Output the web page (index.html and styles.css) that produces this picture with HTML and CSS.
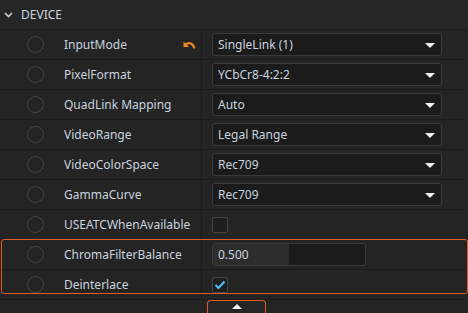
FILE: index.html
```html
<!DOCTYPE html>
<html lang="en">
<head>
    <meta charset="UTF-8">
    <meta name="viewport" content="width=device-width, initial-scale=1.0">
    <title>Device</title>
    <link rel="stylesheet" href="styles.css">
</head>
<body>
    <div class="panel">
        <div class="header">
            <svg class="chevron" width="9" height="6" viewBox="0 0 9 6"><path d="M1 1 L4.5 4.5 L8 1" fill="none" stroke="#c8d0dc" stroke-width="1.6"/></svg>
            <span>DEVICE</span>
        </div>

        <div class="row">
            <div class="name">
                <span class="dot"></span>
                <span class="label">InputMode</span>
                <svg class="reset" width="13" height="9" viewBox="0 0 13 9"><path d="M0.5 0.5 V6 H6 Z" fill="#f08a1a"/><path d="M2.5 3.5 C6 1 10 2 11.5 7.5" fill="none" stroke="#f08a1a" stroke-width="2.2"/></svg>
            </div>
            <div class="value">
                <div class="select">SingleLink (1)<span class="caret"></span></div>
            </div>
        </div>

        <div class="row">
            <div class="name"><span class="dot"></span><span class="label">PixelFormat</span></div>
            <div class="value"><div class="select">YCbCr8-4:2:2<span class="caret"></span></div></div>
        </div>

        <div class="row">
            <div class="name"><span class="dot"></span><span class="label">QuadLink Mapping</span></div>
            <div class="value"><div class="select">Auto<span class="caret"></span></div></div>
        </div>

        <div class="row">
            <div class="name"><span class="dot"></span><span class="label">VideoRange</span></div>
            <div class="value"><div class="select">Legal Range<span class="caret"></span></div></div>
        </div>

        <div class="row">
            <div class="name"><span class="dot"></span><span class="label">VideoColorSpace</span></div>
            <div class="value"><div class="select">Rec709<span class="caret"></span></div></div>
        </div>

        <div class="row">
            <div class="name"><span class="dot"></span><span class="label">GammaCurve</span></div>
            <div class="value"><div class="select">Rec709<span class="caret"></span></div></div>
        </div>

        <div class="row">
            <div class="name"><span class="dot"></span><span class="label">USEATCWhenAvailable</span></div>
            <div class="value"><span class="check"></span></div>
        </div>

        <div class="group">
            <div class="row">
                <div class="name"><span class="dot"></span><span class="label">ChromaFilterBalance</span></div>
                <div class="value">
                    <div class="number"><span class="fill" style="width: 50%"></span><span class="num">0.500</span></div>
                </div>
            </div>
            <div class="row">
                <div class="name"><span class="dot"></span><span class="label">Deinterlace</span></div>
                <div class="value">
                    <span class="check">
                        <svg width="12" height="10" viewBox="0 0 12 10"><path d="M1.5 5 L4.5 8 L10.5 1.5" fill="none" stroke="#4cbcf2" stroke-width="2.2"/></svg>
                    </span>
                </div>
            </div>
        </div>

        <div class="footer">
            <div class="more"><span class="up"></span></div>
        </div>
    </div>
</body>
</html>
```

FILE: styles.css
```css
body {
    margin: 0;
    background-color: #242424;
    font-family: "Noto Sans", "Open Sans", sans-serif;
    font-size: 12px;
    color: #c9d3df;
    overflow: hidden;
}

.panel {
    width: 468px;
}

.header {
    height: 29px;
    border-bottom: 1px solid #1b1b1b;
    display: flex;
    align-items: center;
    padding-left: 4px;
    gap: 8px;
    background-color: #262626;
}

.row {
    display: grid;
    grid-template-columns: 202px 1fr;
    height: 29px;
    border-bottom: 1px solid #1b1b1b;
}

.name {
    display: flex;
    align-items: center;
    border-right: 1px solid #1b1b1b;
    padding-left: 27px;
    position: relative;
}

.dot {
    width: 14px;
    height: 14px;
    border: 1.5px solid #474747;
    border-radius: 50%;
    box-sizing: border-box;
    width: 17px;
    height: 17px;
}

.label {
    margin-left: 20px;
}

.reset {
    position: absolute;
    right: 5px;
    top: 11px;
}

.value {
    display: flex;
    align-items: center;
    padding-left: 10px;
}

.select {
    width: 230px;
    height: 23px;
    box-sizing: border-box;
    background-color: #1b1b1b;
    border: 1px solid #3a3a3a;
    border-radius: 3px;
    display: flex;
    align-items: center;
    padding-left: 5px;
    position: relative;
}

.caret {
    position: absolute;
    right: 6px;
    top: 9px;
    width: 0;
    height: 0;
    border-left: 5px solid transparent;
    border-right: 5px solid transparent;
    border-top: 5px solid #f0f0f0;
}

.check {
    width: 16px;
    height: 16px;
    box-sizing: border-box;
    border: 1px solid #454545;
    border-radius: 2px;
    background-color: #1e1e1e;
    display: flex;
    align-items: center;
    justify-content: center;
}

.number {
    width: 154px;
    height: 23px;
    box-sizing: border-box;
    background-color: #1b1b1b;
    border: 1px solid #3a3a3a;
    border-radius: 3px;
    position: relative;
    overflow: hidden;
    display: flex;
    align-items: center;
}

.fill {
    position: absolute;
    left: 0;
    top: 0;
    bottom: 0;
    background-color: #2d2d2d;
}

.num {
    position: relative;
    padding-left: 5px;
}

.group {
    position: relative;
}

.group::after {
    content: "";
    position: absolute;
    top: -1px;
    left: 1px;
    right: 0;
    height: 55px;
    box-sizing: border-box;
    border: 1px solid #e2592a;
    border-radius: 3px;
    pointer-events: none;
}

.footer {
    height: 20px;
    padding-left: 207px;
}

.more {
    width: 59px;
    height: 20px;
    box-sizing: border-box;
    border: 1px solid #e2592a;
    border-bottom: none;
    border-radius: 4px 4px 0 0;
    background-color: #262626;
    display: flex;
    justify-content: center;
    padding-top: 3px;
}

.up {
    width: 0;
    height: 0;
    border-left: 5px solid transparent;
    border-right: 5px solid transparent;
    border-bottom: 5px solid #f0f0f0;
}
```
